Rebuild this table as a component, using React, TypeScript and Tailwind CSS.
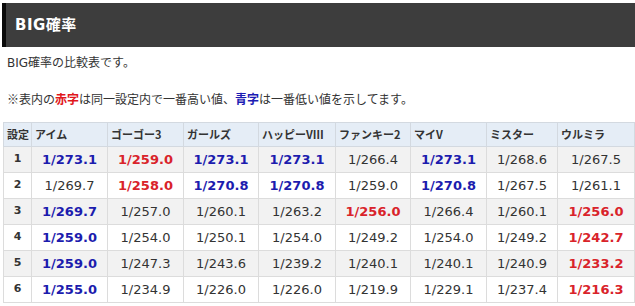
import React from "react";

type Cell = { v: string; c?: "r" | "b" };

const headers = ["アイム", "ゴーゴー3", "ガールズ", "ハッピーVⅢ", "ファンキー2", "マイV", "ミスター", "ウルミラ"];
const widths = ["w-[76px]", "w-[76px]", "w-[75px]", "w-[77px]", "w-[75px]", "w-[76px]", "w-[71px]", "w-[77px]"];

const rows: Cell[][] = [
  [{ v: "1/273.1", c: "b" }, { v: "1/259.0", c: "r" }, { v: "1/273.1", c: "b" }, { v: "1/273.1", c: "b" }, { v: "1/266.4" }, { v: "1/273.1", c: "b" }, { v: "1/268.6" }, { v: "1/267.5" }],
  [{ v: "1/269.7" }, { v: "1/258.0", c: "r" }, { v: "1/270.8", c: "b" }, { v: "1/270.8", c: "b" }, { v: "1/259.0" }, { v: "1/270.8", c: "b" }, { v: "1/267.5" }, { v: "1/261.1" }],
  [{ v: "1/269.7", c: "b" }, { v: "1/257.0" }, { v: "1/260.1" }, { v: "1/263.2" }, { v: "1/256.0", c: "r" }, { v: "1/266.4" }, { v: "1/260.1" }, { v: "1/256.0", c: "r" }],
  [{ v: "1/259.0", c: "b" }, { v: "1/254.0" }, { v: "1/250.1" }, { v: "1/254.0" }, { v: "1/249.2" }, { v: "1/254.0" }, { v: "1/249.2" }, { v: "1/242.7", c: "r" }],
  [{ v: "1/259.0", c: "b" }, { v: "1/247.3" }, { v: "1/243.6" }, { v: "1/239.2" }, { v: "1/240.1" }, { v: "1/240.1" }, { v: "1/240.9" }, { v: "1/233.2", c: "r" }],
  [{ v: "1/255.0", c: "b" }, { v: "1/234.9" }, { v: "1/226.0" }, { v: "1/226.0" }, { v: "1/219.9" }, { v: "1/229.1" }, { v: "1/237.4" }, { v: "1/216.3", c: "r" }],
];

const jp = "font-['Noto_Sans_CJK_JP','Noto_Sans',sans-serif]";
const num = "font-['DejaVu_Sans','Noto_Sans_CJK_JP',sans-serif]";

export default function App() {
  return (
    <div className={`w-[635px] h-[306px] bg-white overflow-hidden text-[#333] ${jp}`}>
      <div className="mt-[3px] ml-[2px] h-[44px] bg-[#3d3d3d] border-l-4 border-[#0a0a0a] flex items-center pl-[9px]">
        <span className={`text-white font-bold text-[15px] tracking-[0.5px] ${num}`}>
          BIG<span className={jp}>確率</span>
        </span>
      </div>
      <div className="mt-[6px] ml-[7px] text-[12px] leading-[18px]">
        <span className={num}>BIG</span>確率の比較表です。
      </div>
      <div className="mt-[18px] ml-[7px] text-[12px] leading-[18px]">
        ※表内の<span className="text-[#e0161b] font-bold">赤字</span>は同一設定内で一番高い値、
        <span className="text-[#1c1cb4] font-bold">青字</span>は一番低い値を示してます。
      </div>
      <table className="mt-[14px] ml-[3px] border-collapse table-fixed">
        <thead>
          <tr className="h-[24px] bg-[#e5edf6]">
            <th className="w-[28px] border border-[#d3d9e0] text-[11px] font-bold text-left pl-[3px] text-[#333]">設定</th>
            {headers.map((h, i) => (
              <th key={i} className={`${widths[i]} border border-[#d3d9e0] text-[11px] font-bold text-left pl-[3px] text-[#333] whitespace-nowrap`}>
                {h}
              </th>
            ))}
          </tr>
        </thead>
        <tbody>
          {rows.map((r, ri) => (
            <tr key={ri} className={`h-[26px] ${ri % 2 === 0 ? "bg-[#f2f2f2]" : "bg-white"}`}>
              <td className={`border border-[#dcdcdc] text-center text-[11px] font-bold text-[#333] ${num}`}>{ri + 1}</td>
              {r.map((c, ci) => (
                <td
                  key={ci}
                  className={`border border-[#dcdcdc] text-center text-[13px] ${num} ${
                    c.c === "r" ? "text-[#d9232a] font-bold" : c.c === "b" ? "text-[#1c1cae] font-bold" : "text-[#333]"
                  }`}
                >
                  {c.v}
                </td>
              ))}
            </tr>
          ))}
        </tbody>
      </table>
    </div>
  );
}
